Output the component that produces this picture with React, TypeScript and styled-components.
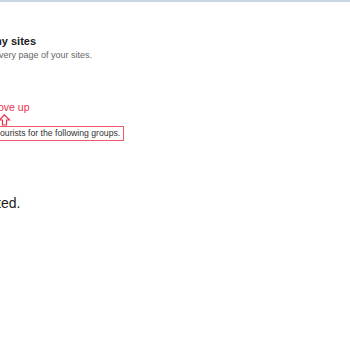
import React from "react";
import styled, { createGlobalStyle } from "styled-components";

const Global = createGlobalStyle`
  html, body { margin: 0; padding: 0; background: #fff; }
  body { font-family: "Liberation Sans", Arial, sans-serif; overflow: hidden; }
`;

const Page = styled.div`
  width: 350px;
  height: 350px;
  overflow: hidden;
  border-top: 2px solid #c9d6e8;
  box-sizing: border-box;
  display: flex;
  flex-direction: column;
`;

const Line = styled.div<{ $shift: number }>`
  margin-left: ${(p) => -p.$shift}px;
  white-space: nowrap;
`;

const Heading = styled(Line)`
  margin-top: 32px;
  font-size: 11px;
  font-weight: bold;
  color: #222;
  line-height: 14px;
`;

const Hint = styled(Line)`
  margin-top: 1px;
  font-size: 9px;
  color: #666;
  line-height: 12px;
`;

const Callout = styled(Line)`
  margin-top: 39px;
  font-size: 10.5px;
  color: #ec3049;
  line-height: 14px;
`;

const Arrow = styled.svg`
  display: block;
  margin-left: -1px;
  margin-top: 0;
`;

const Boxed = styled(Line)`
  align-self: flex-start;
  margin-top: 0;
  border: 1px solid #ef5a6a;
  padding: 1px 3px 1px 0;
  font-size: 8.7px;
  color: #333;
  line-height: 11px;
`;

const Big = styled(Line)`
  margin-top: 54px;
  font-size: 14px;
  color: #222;
  line-height: 17px;
`;

export default function App() {
  return (
    <>
      <Global />
      <Page>
        <Heading $shift={8}>my sites</Heading>
        <Hint $shift={1}>very page of your sites.</Hint>
        <Callout $shift={2}>ove up</Callout>
        <Arrow width="12" height="12" viewBox="0 0 12 12">
          <path d="M5.5 0.8 L10.5 6 L7.5 6 L7.5 11 L3.5 11 L3.5 6 L0.5 6 Z" fill="none" stroke="#ec3049" strokeWidth="1.2" />
        </Arrow>
        <Boxed $shift={1}>ourists for the following groups.</Boxed>
        <Big $shift={3}>ted.</Big>
      </Page>
    </>
  );
}
